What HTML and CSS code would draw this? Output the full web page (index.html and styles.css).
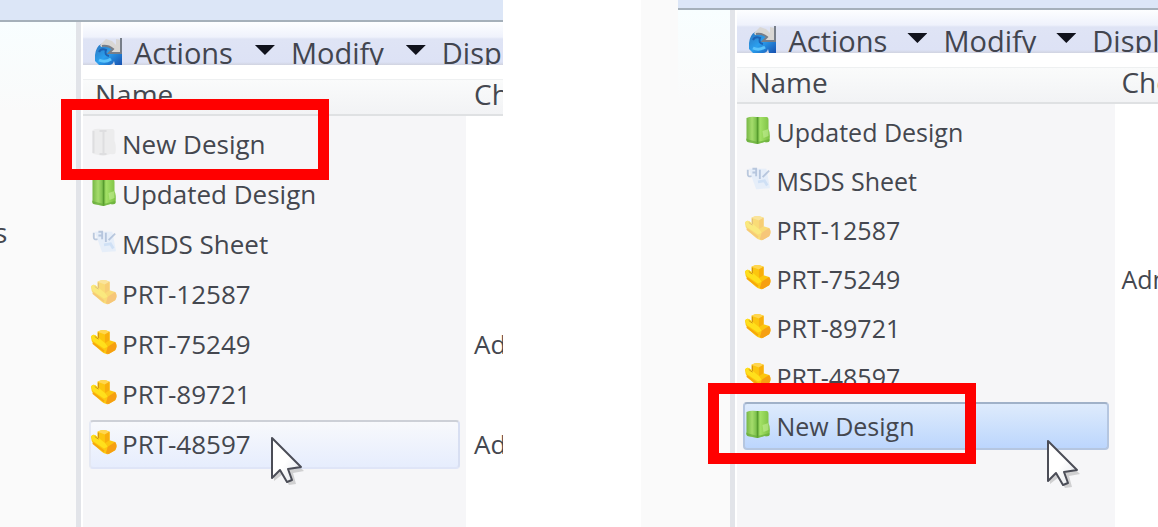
FILE: index.html
```html
<!DOCTYPE html>
<html lang="en">
<head>
<meta charset="utf-8">
<title>Document list order</title>
<link rel="stylesheet" href="styles.css">
</head>
<body>
<svg class="defs" aria-hidden="true">
  <defs>
    <linearGradient id="gGreen" x1="0" x2="1" y1="0" y2="0">
      <stop offset="0" stop-color="#74b543"/><stop offset=".25" stop-color="#a5dc6c"/><stop offset=".42" stop-color="#7fc24e"/><stop offset=".48" stop-color="#569b2e"/><stop offset=".58" stop-color="#a4e267"/><stop offset="1" stop-color="#7cc043"/>
    </linearGradient>
    <linearGradient id="gBlue" x1="0" x2="1" y1="0" y2="1">
      <stop offset="0" stop-color="#2c6fb8"/><stop offset=".5" stop-color="#2ba0ee"/><stop offset="1" stop-color="#174fae"/>
    </linearGradient>
    <linearGradient id="gCursor" x1="0" x2="1" y1="0" y2="1">
      <stop offset=".5" stop-color="#fff"/><stop offset="1" stop-color="#dfe2e8"/>
    </linearGradient>
    <symbol id="book" viewBox="0 0 25 28">
      <path d="M1 2 Q5 0 11 1 L21 1 Q23 1 23 4 V13 Q25 17 24 25 Q23 27 19 26 L12 28 L2 26 Q0 25 1 22Z" fill="url(#gGreen)"/>
      <path d="M1 23 L12 26 L24 23 V25 Q23 27 19 26 L12 28 L2 26Z" fill="#63a839" opacity=".6"/>
      <path d="M17 15 L23 13 L23 20 L18 22Z" fill="#c3ef95" opacity=".6"/>
    </symbol>
    <symbol id="book-off" viewBox="0 0 25 28">
      <path d="M1 2 Q5 0 11 1 L21 1 Q23 1 23 4 V13 Q25 17 24 25 Q23 27 19 26 L12 28 L2 26 Q0 25 1 22Z" fill="#ececed"/>
      <path d="M12 2V27M2 3V25M8 3H15M8 26H15" stroke="#dedee0" stroke-width="2"/>
    </symbol>
    <symbol id="part" viewBox="0 0 28 28">
      <path d="M0 8 Q2 5 5 7 L7 9 V3 Q13 -1 20 3 V12 L26 14 Q29 18 26 23 L19 27 Q15 28 11 24 L3 17 Q0 13 0 8Z" fill="#fcc60e"/>
      <path d="M7 3 Q13 -1 20 3 L15 6Z" fill="#ffd650"/>
      <path d="M15 6 L20 3 V12 L15 15Z" fill="#f8ae0c"/>
      <path d="M0 8 Q2 5 5 7 L15 15 L18 19 L14 21 L2 13Z" fill="#ffe01c"/>
      <path d="M18 19 L26 14 Q29 18 26 23 L19 27 L16 26Z" fill="#f69f12"/>
      <path d="M2 15 L14 24" stroke="#f7a70b" stroke-width="2"/>
      <path d="M8 4V10M4 8L8 11" stroke="#c98a18" stroke-width="1"/>
    </symbol>
    <symbol id="sheet" viewBox="0 0 28 28">
      <path d="M4 3 H23 L27 24 L12 25Z" fill="#e2ecf9" opacity=".8"/>
      <path d="M3 4 V9 Q3 12 7 11 M8 3 H12 V11 M8 7 H11 M16 4 V14 M19 12 L26 5" fill="none" stroke="#a6b8d4" stroke-width="2" opacity=".75"/>
      <path d="M14 17 L21 16 L24 21" fill="none" stroke="#cfe0f5" stroke-width="3"/>
    </symbol>
    <symbol id="gear" viewBox="0 0 28 27">
      <path d="M0 23 Q-1 10 6 6 L14 4 L22 10 L27 12 V27 H20 L19 23 Q18 27 14 27 H4Z" fill="url(#gBlue)"/>
      <path d="M5 7 L11 1 L17 3 L21 7 V1 L26 2 V15 H14 L17 11 Q12 7 6 9Z" fill="#d9d7d4"/>
      <path d="M26 0V15H14L18 11Q13 7 7 8" fill="none" stroke="#777e89" stroke-width="2"/>
      <path d="M4 14Q6 10 11 12Q9 17 14 18" fill="none" stroke="#1d62b4" stroke-width="2"/>
      <path d="M4 22Q10 25 16 21" fill="none" stroke="#5cc4fb" stroke-width="3"/>
    </symbol>
    <symbol id="cursor" viewBox="0 0 36 52">
      <path d="M4 6 V45 L13 38 L19 49 L26 48 L23 37 L34 35Z" fill="#777" opacity=".3"/>
      <path d="M2 2 V42 L10 34 L17 46 L22 44 L18 33 L31 31Z" fill="url(#gCursor)" stroke="#4b4d57" stroke-width="2" stroke-linejoin="round"/>
    </symbol>
  </defs>
</svg>

<main class="compare">
  <section class="panel before" aria-label="Before">
    <div class="ribbon"></div>
    <div class="body">
      <aside class="tree"><span class="tree-label">s</span></aside>
      <div class="list">
        <nav class="toolbar">
          <svg class="tool-icon"><use href="#gear"/></svg>
          <button class="menu">Actions<i class="arrow"></i></button>
          <button class="menu">Modify<i class="arrow"></i></button>
          <button class="menu">Display</button>
        </nav>
        <table class="files">
          <colgroup><col class="col-name"><col></colgroup>
          <thead><tr><th>Name</th><th>Checked</th></tr></thead>
          <tbody>
            <tr><td><div class="item"><svg class="icon"><use href="#book-off"/></svg>New Design</div></td><td></td></tr>
            <tr><td><div class="item"><svg class="icon"><use href="#book"/></svg>Updated Design</div></td><td></td></tr>
            <tr><td><div class="item"><svg class="icon"><use href="#sheet"/></svg>MSDS Sheet</div></td><td></td></tr>
            <tr><td><div class="item"><svg class="icon faded"><use href="#part"/></svg>PRT-12587</div></td><td></td></tr>
            <tr><td><div class="item"><svg class="icon"><use href="#part"/></svg>PRT-75249</div></td><td>Admin</td></tr>
            <tr><td><div class="item"><svg class="icon"><use href="#part"/></svg>PRT-89721</div></td><td></td></tr>
            <tr><td><div class="item hover"><svg class="icon"><use href="#part"/></svg>PRT-48597</div></td><td>Admin</td></tr>
          </tbody>
        </table>
        <div class="callout"></div>
        <svg class="cursor"><use href="#cursor"/></svg>
      </div>
    </div>
  </section>

  <section class="panel after" aria-label="After">
    <div class="ribbon"></div>
    <div class="body">
      <aside class="tree"></aside>
      <div class="list">
        <nav class="toolbar">
          <svg class="tool-icon"><use href="#gear"/></svg>
          <button class="menu">Actions<i class="arrow"></i></button>
          <button class="menu">Modify<i class="arrow"></i></button>
          <button class="menu">Display</button>
        </nav>
        <table class="files">
          <colgroup><col class="col-name"><col></colgroup>
          <thead><tr><th>Name</th><th>Checked</th></tr></thead>
          <tbody>
            <tr><td><div class="item"><svg class="icon"><use href="#book"/></svg>Updated Design</div></td><td></td></tr>
            <tr><td><div class="item"><svg class="icon"><use href="#sheet"/></svg>MSDS Sheet</div></td><td></td></tr>
            <tr><td><div class="item"><svg class="icon faded"><use href="#part"/></svg>PRT-12587</div></td><td></td></tr>
            <tr><td><div class="item"><svg class="icon"><use href="#part"/></svg>PRT-75249</div></td><td>Admin</td></tr>
            <tr><td><div class="item"><svg class="icon"><use href="#part"/></svg>PRT-89721</div></td><td></td></tr>
            <tr><td><div class="item"><svg class="icon"><use href="#part"/></svg>PRT-48597</div></td><td></td></tr>
            <tr><td><div class="item selected"><svg class="icon"><use href="#book"/></svg>New Design</div></td><td></td></tr>
          </tbody>
        </table>
        <div class="callout"></div>
        <svg class="cursor"><use href="#cursor"/></svg>
      </div>
    </div>
  </section>
</main>
</body>
</html>
```
FILE: styles.css
```css
* { box-sizing: border-box; }

body {
  margin: 0;
  background: #fff;
  color: #44474f;
  font-family: "Open Sans", "Noto Sans", sans-serif;
}

.defs { position: absolute; width: 0; height: 0; }

.compare {
  display: grid;
  grid-template-columns: 503fr 517fr;
  column-gap: 12%;
  min-height: 100vh;
  overflow: hidden;
}

.panel {
  display: flex;
  flex-direction: column;
  min-width: 0;
  overflow: hidden;
  background: #fff;
}

.before {
  --ribbon: 22px;
  --tree: 81px;
  --name: 383px;
  --second: 8px;
  --row: 50px;
  --text: 26px;
  --menu-gap: 22px;
}

.after {
  --ribbon: 10px;
  --tree: 57px;
  --name: 378px;
  --second: 6px;
  --row: 49px;
  --text: 25px;
  --menu-gap: 20px;
  border-left: 37px solid #fafafa;
}

.ribbon {
  height: var(--ribbon);
  background: #dce6f7;
  border-bottom: 2px solid #a5b0ba;
}

.body { flex: 1; display: flex; }

.tree {
  flex: none;
  width: var(--tree);
  padding-top: 190px;
  border-right: 5px solid #e2e4e9;
  background: linear-gradient(#f8feff, #fafafa 90px);
  overflow: hidden;
}

.tree-label {
  display: block;
  margin-left: -6px;
  font-size: 28px;
  line-height: 40px;
}

.list {
  position: relative;
  flex: 1;
  min-width: 0;
  padding-left: 2px;
  background: linear-gradient(#f6f6f8, #f6f6f8) 2px 94px / var(--name) 100% no-repeat #fff;
}

.toolbar {
  display: flex;
  align-items: flex-start;
  height: 43px;
  margin-bottom: 14px;
  padding: 11px 0 0 12px;
  overflow: hidden;
  background: linear-gradient(#fdfeff, #eff2fc 15px, #dfe4f5 17px, #dde2f5 40px, #d0d3e0);
}

.tool-icon {
  flex: none;
  width: 28px;
  height: 27px;
  margin: 5px 11px 0 0;
}

.menu {
  display: flex;
  flex: none;
  align-items: center;
  gap: var(--menu-gap);
  margin-right: 16px;
  padding: 0;
  border: 0;
  background: none;
  color: #42454f;
  font-family: inherit;
  font-size: 29px;
  line-height: 40px;
}

.arrow {
  width: 20px;
  height: 10px;
  margin-bottom: 6px;
  background: #10121c;
  clip-path: polygon(0 0, 100% 0, 50% 100%);
}

.files {
  width: 100%;
  table-layout: fixed;
  border-collapse: separate;
  border-spacing: 0;
}

.col-name { width: var(--name); }

.files thead tr { height: 37px; }

.files th {
  padding: 0 0 6px 12px;
  border-top: 1px solid #eef0f1;
  border-bottom: 2px solid #dfe1e3;
  background: linear-gradient(#fafbfb, #f2f3f5);
  font-size: 28px;
  font-weight: 400;
  line-height: 28px;
  text-align: left;
  white-space: nowrap;
}

.files th + th,
.files td + td { padding-left: var(--second); }

.files tbody::before {
  content: "";
  display: block;
  height: 3px;
}

.files td {
  height: var(--row);
  padding: 0;
  font-size: var(--text);
  line-height: 40px;
  overflow: hidden;
  white-space: nowrap;
}

.item {
  display: flex;
  align-items: center;
  height: calc(var(--row) - 1px);
  margin: 0 6px;
  border: 2px solid transparent;
  border-radius: 4px;
}

.icon {
  flex: none;
  width: 26px;
  height: 28px;
  margin: 0 5px 4px 0;
}

.faded { opacity: .55; }

.hover {
  border-color: #cdd0d7 #d8dff2 #dfe5f7 #e4e8f3;
  background: linear-gradient(#f8f9fc, #e6edfd);
}

.selected {
  border-color: #a0b1c8 #b5c6e0 #b5c6e0;
  background: linear-gradient(#deebfc, #bcd6fd);
}

.callout {
  position: absolute;
  width: 268px;
  height: 81px;
  border: 11px solid #f00;
}

.cursor { position: absolute; width: 36px; height: 52px; }

.before .callout { left: -20px; top: 77px; }
.before .cursor { left: 189px; top: 414px; }
.after .callout { left: -27px; top: 373px; }
.after .cursor { left: 311px; top: 429px; }
```
